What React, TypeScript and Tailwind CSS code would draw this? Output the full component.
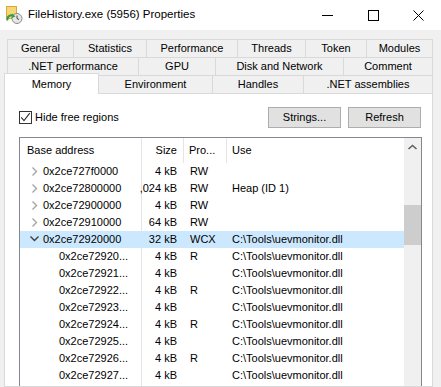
import React from "react";

const Tab = ({ label, className }: { label: string; className: string }) => (
  <div
    className={`flex items-center justify-center border-t border-l border-[#d9d9d9] h-[18px] ${className}`}
  >
    {label}
  </div>
);

type Row = {
  child: boolean;
  open?: boolean;
  addr: string;
  size: string;
  prot: string;
  use: string;
};

const dll = "C:\\Tools\\uevmonitor.dll";

const rows: Row[] = [
  { child: false, addr: "0x2ce727f0000", size: "4 kB", prot: "RW", use: "" },
  { child: false, addr: "0x2ce72800000", size: ",024 kB", prot: "RW", use: "Heap (ID 1)" },
  { child: false, addr: "0x2ce72900000", size: "4 kB", prot: "RW", use: "" },
  { child: false, addr: "0x2ce72910000", size: "64 kB", prot: "RW", use: "" },
  { child: false, open: true, addr: "0x2ce72920000", size: "32 kB", prot: "WCX", use: dll },
  { child: true, addr: "0x2ce72920...", size: "4 kB", prot: "R", use: dll },
  { child: true, addr: "0x2ce72921...", size: "4 kB", prot: "", use: dll },
  { child: true, addr: "0x2ce72922...", size: "4 kB", prot: "R", use: dll },
  { child: true, addr: "0x2ce72923...", size: "4 kB", prot: "", use: dll },
  { child: true, addr: "0x2ce72924...", size: "4 kB", prot: "R", use: dll },
  { child: true, addr: "0x2ce72925...", size: "4 kB", prot: "", use: dll },
  { child: true, addr: "0x2ce72926...", size: "4 kB", prot: "R", use: dll },
  { child: true, addr: "0x2ce72927...", size: "4 kB", prot: "", use: dll },
];

const Chevron = ({ open }: { open?: boolean }) => (
  <svg width="16" height="17" viewBox="0 0 16 17" className="shrink-0">
    {open ? (
      <polyline points="3.5,5.5 7.5,9.5 11.5,5.5" fill="none" stroke="#404040" strokeWidth="1.4" />
    ) : (
      <polyline points="5.5,4.5 9.5,8.5 5.5,12.5" fill="none" stroke="#a6a6a6" strokeWidth="1.4" />
    )}
  </svg>
);

export default function App() {
  return (
    <div className="w-[441px] h-[387px] overflow-hidden bg-[#f0f0f0] text-black font-['Liberation_Sans',Arial,sans-serif] text-[11px] leading-none flex flex-col">
      {/* Title bar */}
      <div className="h-[30px] bg-white flex items-center shrink-0">
        <svg width="18" height="18" viewBox="0 0 18 18" className="ml-[5px] shrink-0">
          <rect x="1.5" y="0.5" width="10" height="12" fill="#f7d774" stroke="#d6a940" />
          <circle cx="12" cy="12.5" r="5" fill="#e6e6e6" stroke="#8a8a8a" />
          <polyline points="12,9.5 12,12.5 14,13.5" fill="none" stroke="#444" strokeWidth="1" />
          <path d="M2.5 14.5 A4 4 0 0 1 8.5 10" fill="none" stroke="#2f9e44" strokeWidth="2" />
          <polygon points="7,7.5 10.5,10.5 6.5,12" fill="#2f9e44" />
        </svg>
        <span className="ml-[5px] text-[11.5px]">FileHistory.exe (5956) Properties</span>
        <div className="ml-auto flex h-full">
          <div className="w-[46px] h-full flex items-center justify-center">
            <svg width="11" height="11" viewBox="0 0 11 11">
              <line x1="0" y1="5.5" x2="11" y2="5.5" stroke="#000" strokeWidth="1" />
            </svg>
          </div>
          <div className="w-[46px] h-full flex items-center justify-center">
            <svg width="11" height="11" viewBox="0 0 11 11">
              <rect x="0.5" y="0.5" width="10" height="10" fill="none" stroke="#000" strokeWidth="1" />
            </svg>
          </div>
          <div className="w-[45px] h-full flex items-center justify-center">
            <svg width="11" height="11" viewBox="0 0 11 11">
              <line x1="0.5" y1="0.5" x2="10.5" y2="10.5" stroke="#000" strokeWidth="1" />
              <line x1="10.5" y1="0.5" x2="0.5" y2="10.5" stroke="#000" strokeWidth="1" />
            </svg>
          </div>
        </div>
      </div>

      {/* Tabs */}
      <div className="ml-[4px] mt-[9px] w-[429px] flex flex-col shrink-0">
        <div className="flex pl-[3px]">
          <Tab label="General" className="w-[66px]" />
          <Tab label="Statistics" className="w-[73px]" />
          <Tab label="Performance" className="w-[91px]" />
          <Tab label="Threads" className="w-[68px]" />
          <Tab label="Token" className="w-[61px]" />
          <Tab label="Modules" className="w-[67px] border-r" />
        </div>
        <div className="flex pl-[3px]">
          <Tab label=".NET performance" className="w-[131px]" />
          <Tab label="GPU" className="w-[77px]" />
          <Tab label="Disk and Network" className="w-[128px]" />
          <Tab label="Comment" className="w-[90px] border-r" />
        </div>
        <div className="flex h-[18px] items-end">
          <div className="w-[95px] h-[21px] -mb-px relative z-10 bg-white border-t border-x border-[#d9d9d9] flex items-center justify-center">
            Memory
          </div>
          <div className="w-[113px] h-[18px] border-t border-[#d9d9d9] flex items-center justify-center">
            Environment
          </div>
          <Tab label="Handles" className="w-[91px]" />
          <Tab label=".NET assemblies" className="w-[130px] border-r" />
        </div>
      </div>

      {/* Pane */}
      <div className="ml-[4px] w-[429px] flex-1 bg-white border border-[#d9d9d9] flex flex-col pt-[13px] pl-[14px] min-h-0">
        <div className="w-[402px] h-[21px] flex items-center">
          <svg width="13" height="13" viewBox="0 0 13 13" className="shrink-0">
            <rect x="0.5" y="0.5" width="12" height="12" fill="#fff" stroke="#333" />
            <polyline points="2.2,6.3 5,9.6 10.8,2.2" fill="none" stroke="#333" strokeWidth="1.1" />
          </svg>
          <span className="ml-[3px]">Hide free regions</span>
          <div className="ml-auto flex gap-[7px]">
            <div className="w-[73px] h-[21px] bg-[#e1e1e1] border border-[#adadad] flex items-center justify-center">
              Strings...
            </div>
            <div className="w-[73px] h-[21px] bg-[#e1e1e1] border border-[#adadad] flex items-center justify-center">
              Refresh
            </div>
          </div>
        </div>

        {/* List view */}
        <div className="mt-[9px] w-[403px] flex-1 border border-b-0 border-[#828790] flex min-h-0 overflow-hidden">
          <div className="flex-1 flex flex-col relative">
            <div className="flex h-[25px] shrink-0">
              <div className="w-[122px] pl-[7px] flex items-center border-r border-[#e5e5e5]">Base address</div>
              <div className="w-[42px] pr-[6px] flex items-center justify-end border-r border-[#e5e5e5]">Size</div>
              <div className="w-[43px] pl-[5px] flex items-center border-r border-[#e5e5e5]">Pro...</div>
              <div className="flex-1 pl-[5px] flex items-center">Use</div>
            </div>
            <div className="absolute left-[121px] top-[25px] bottom-0 w-px bg-[#e5e5e5]" />
            {rows.map((r, i) => (
              <div
                key={i}
                className={`flex h-[17px] shrink-0 items-center relative ${r.open ? "bg-[#cce8ff]" : ""}`}
              >
                <div className={`w-[122px] flex items-center whitespace-nowrap overflow-hidden ${r.child ? "pl-[39px]" : "pl-[7px]"}`}>
                  {!r.child && <Chevron open={r.open} />}
                  <span>{r.addr}</span>
                </div>
                <div className="w-[42px] pr-[7px] flex justify-end whitespace-nowrap">{r.size}</div>
                <div className="w-[43px] pl-[6px] whitespace-nowrap">{r.prot}</div>
                <div className="flex-1 pl-[5px] whitespace-nowrap">{r.use}</div>
              </div>
            ))}
          </div>
          {/* Scrollbar */}
          <div className="w-[17px] bg-[#f0f0f0] flex flex-col shrink-0">
            <div className="h-[17px] flex items-center justify-center">
              <svg width="17" height="17" viewBox="0 0 17 17">
                <polyline points="4.5,11 8.5,7.5 12.5,11" fill="none" stroke="#606060" strokeWidth="1.6" />
              </svg>
            </div>
            <div className="mt-[50px] h-[40px] w-full bg-[#cdcdcd]" />
          </div>
        </div>
      </div>
    </div>
  );
}
